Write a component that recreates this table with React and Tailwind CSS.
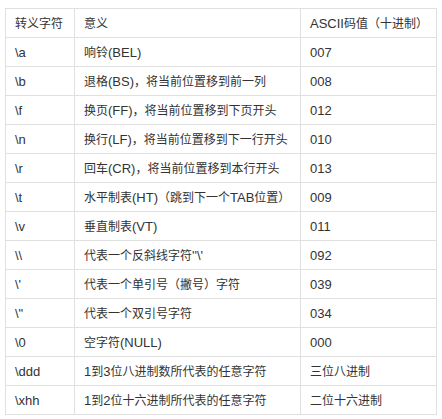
import React from "react";

const rows = [
  ["\\a", "响铃(BEL)", "007"],
  ["\\b", "退格(BS)，将当前位置移到前一列", "008"],
  ["\\f", "换页(FF)，将当前位置移到下页开头", "012"],
  ["\\n", "换行(LF)，将当前位置移到下一行开头", "010"],
  ["\\r", "回车(CR)，将当前位置移到本行开头", "013"],
  ["\\t", "水平制表(HT)（跳到下一个TAB位置）", "009"],
  ["\\v", "垂直制表(VT)", "011"],
  ["\\\\", "代表一个反斜线字符''\\'", "092"],
  ["\\'", "代表一个单引号（撇号）字符", "039"],
  ["\\\"", "代表一个双引号字符", "034"],
  ["\\0", "空字符(NULL)", "000"],
  ["\\ddd", "1到3位八进制数所代表的任意字符", "三位八进制"],
  ["\\xhh", "1到2位十六进制所代表的任意字符", "二位十六进制"],
];

function Mixed({ text }) {
  const parts = text.split(/([\u3000-\u9fff\uff00-\uffef]+)/).filter(Boolean);
  return (
    <>
      {parts.map((p, i) =>
        /[\u3000-\u9fff\uff00-\uffef]/.test(p) ? (
          <span key={i} className="text-[12px]">{p}</span>
        ) : (
          <span key={i}>{p}</span>
        )
      )}
    </>
  );
}

export default function App() {
  const cell = "border border-[#e0e0e0] h-[29px] px-[9px] py-0 text-left align-middle font-normal whitespace-nowrap";
  return (
    <div className="w-[442px] h-[419px] bg-white pl-[5px] pt-[8px] text-[13px] text-[#333] leading-none" style={{ fontFamily: '"Liberation Sans", Arial, "Noto Sans CJK SC", sans-serif' }}>
      <table className="border-collapse table-fixed w-[431px]">
        <colgroup>
          <col className="w-[69px]" />
          <col className="w-[226px]" />
          <col className="w-[136px]" />
        </colgroup>
        <thead>
          <tr>
            <th className={cell}><Mixed text="转义字符" /></th>
            <th className={cell}><Mixed text="意义" /></th>
            <th className={cell}><Mixed text="ASCII码值（十进制）" /></th>
          </tr>
        </thead>
        <tbody>
          {rows.map((r, i) => (
            <tr key={i}>
              <td className={cell}><Mixed text={r[0]} /></td>
              <td className={cell}><Mixed text={r[1]} /></td>
              <td className={cell}><Mixed text={r[2]} /></td>
            </tr>
          ))}
        </tbody>
      </table>
    </div>
  );
}
